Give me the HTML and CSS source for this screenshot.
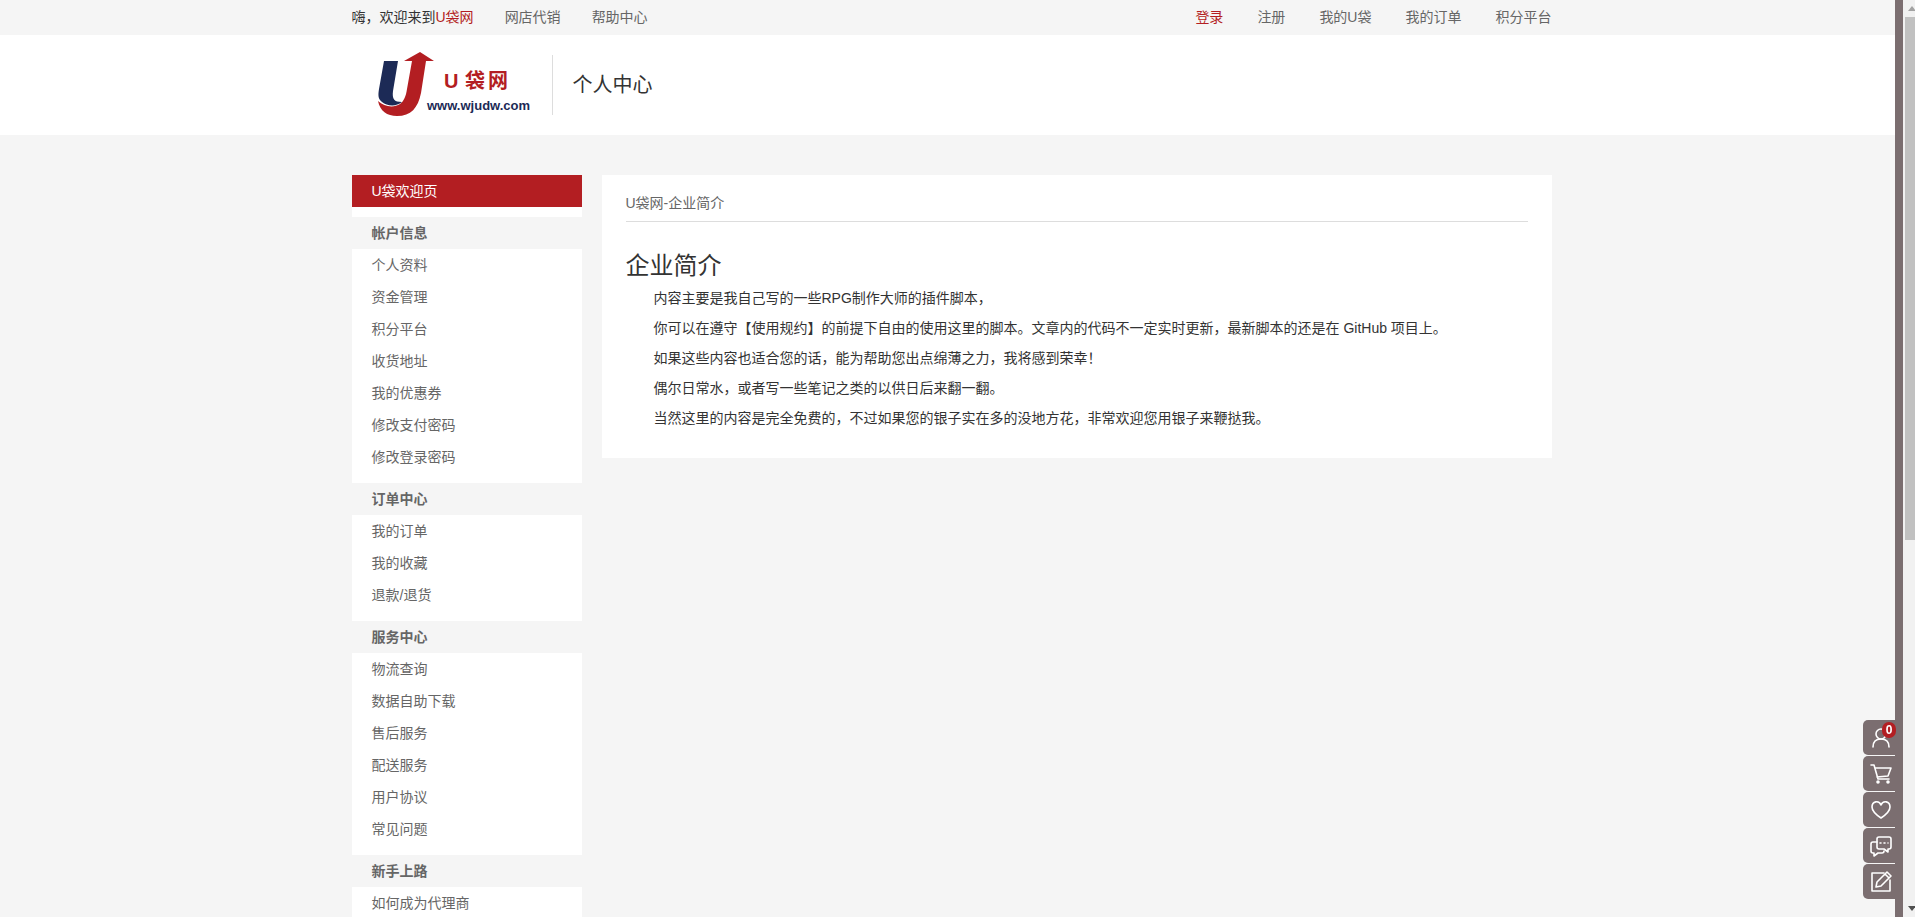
FILE: index.html
```html
<!DOCTYPE html>
<html lang="zh-CN">
<head>
  <meta charset="UTF-8">
  <meta name="viewport" content="width=device-width, initial-scale=1">
  <title>U袋网 - 企业简介</title>
  <link rel="stylesheet" href="styles.css">
</head>
<body>

  <!-- 顶部导航 -->
  <div class="top-bar">
    <div class="container top-inner">
      <nav class="top-links">
        <span>嗨，欢迎来到<a class="red" href="#">U袋网</a></span>
        <a href="#">网店代销</a>
        <a href="#">帮助中心</a>
      </nav>
      <nav class="top-links">
        <a class="red" href="#">登录</a>
        <a href="#">注册</a>
        <a href="#">我的U袋</a>
        <a href="#">我的订单</a>
        <a href="#">积分平台</a>
      </nav>
    </div>
  </div>

  <header class="header">
    <div class="container header-inner">
      <a class="logo" href="#">
        <svg width="200" height="80" viewBox="0 0 200 80" role="img" aria-label="U袋网">
          <path fill="#b31e22" d="M68 7 L82 16 L74 16 L69 48 C66 63 59 71 45 71 C35 71 28 66 26 56 C32 62 42 63 48 59 C52 56 54 51 55 44 L60 16 L52 16 Z"/>
          <path fill="#1c2a56" d="M32 16 H46 L41 46 C40 54 42 57 50 57 C44 62 35 61 30 57 C26 54 26 50 27 44 Z"/>
          <text class="logo-name" x="92" y="43">U</text>
          <text class="logo-name" x="113" y="43">袋</text>
          <text class="logo-name" x="136" y="43">网</text>
          <text class="logo-url" x="75" y="65">www.wjudw.com</text>
        </svg>
      </a>
      <div class="header-title">个人中心</div>
    </div>
  </header>

  <div class="container content">
    <aside class="side">
      <div class="side-group">
        <a class="active" href="#">U袋欢迎页</a>
      </div>
      <div class="side-group">
        <h3>帐户信息</h3>
        <a href="#">个人资料</a>
        <a href="#">资金管理</a>
        <a href="#">积分平台</a>
        <a href="#">收货地址</a>
        <a href="#">我的优惠券</a>
        <a href="#">修改支付密码</a>
        <a href="#">修改登录密码</a>
      </div>
      <div class="side-group">
        <h3>订单中心</h3>
        <a href="#">我的订单</a>
        <a href="#">我的收藏</a>
        <a href="#">退款/退货</a>
      </div>
      <div class="side-group">
        <h3>服务中心</h3>
        <a href="#">物流查询</a>
        <a href="#">数据自助下载</a>
        <a href="#">售后服务</a>
        <a href="#">配送服务</a>
        <a href="#">用户协议</a>
        <a href="#">常见问题</a>
      </div>
      <div class="side-group">
        <h3>新手上路</h3>
        <a href="#">如何成为代理商</a>
      </div>
    </aside>

    <main class="main">
      <div class="main-title">U袋网-企业简介</div>
      <article class="article">
        <h1>企业简介</h1>
        <p>内容主要是我自己写的一些RPG制作大师的插件脚本，</p>
        <p>你可以在遵守【使用规约】的前提下自由的使用这里的脚本。文章内的代码不一定实时更新，最新脚本的还是在 GitHub 项目上。</p>
        <p>如果这些内容也适合您的话，能为帮助您出点绵薄之力，我将感到荣幸！</p>
        <p>偶尔日常水，或者写一些笔记之类的以供日后来翻一翻。</p>
        <p>当然这里的内容是完全免费的，不过如果您的银子实在多的没地方花，非常欢迎您用银子来鞭挞我。</p>
      </article>
    </main>
  </div>

  <!-- 右侧悬浮工具栏 -->
  <div class="toolbar">
    <div class="tools">
      <a href="#" aria-label="个人中心">
        <svg viewBox="0 0 22 22"><circle cx="11" cy="7" r="5"/><path d="M3 20c0-5 3-8 8-8s8 3 8 8"/></svg>
        <span class="badge">0</span>
      </a>
      <a href="#" aria-label="购物车">
        <svg viewBox="0 0 22 22"><path d="M1 2h3l4 14h11M5 5h16l-3 8-11 1"/><circle class="dot" cx="8" cy="19" r="1"/><circle class="dot" cx="18" cy="19" r="1"/></svg>
      </a>
      <a href="#" aria-label="收藏">
        <svg viewBox="0 0 22 22"><path d="M11 19C5 15 2 12 2 8c0-6 7-7 9-2 2-5 9-4 9 2 0 4-3 7-9 11z"/></svg>
      </a>
      <a href="#" aria-label="在线客服">
        <svg viewBox="0 0 22 22"><path d="M9 2h10q2 0 2 2v8q0 2-2 2h-1v3l-4-3H9q-2 0-2-2V4q0-2 2-2z"/><path d="M7 7H3Q1 7 1 9v7q0 2 2 2h1v3l4-3h4q2 0 2-2"/><path d="M10 8h1M14 8h1M18 8h0"/></svg>
      </a>
      <a href="#" aria-label="意见反馈">
        <svg viewBox="0 0 22 22"><path d="M14 2H2v18h18V9"/><path d="M6 16l1-5L17 1l4 4-10 10zM15 3l4 4"/></svg>
      </a>
    </div>
    <div class="strip"></div>
  </div>

  <div class="scrollbar">
    <svg class="arrow" viewBox="0 0 17 17"><path fill="#a3a3a3" d="M5 11h8l-4-5z"/></svg>
    <div class="thumb"></div>
    <svg class="arrow" viewBox="0 0 17 17"><path fill="#505050" d="M5 6h8l-4 5z"/></svg>
  </div>

</body>
</html>
```
FILE: styles.css
```css
* {
  box-sizing: border-box;
}
html {
  height: 100%;
}
body {
  margin: 0;
  height: 100%;
  padding-right: 12px;
  overflow: hidden;
  background: #f5f5f5;
  color: #333;
  font-family: "Liberation Sans", "Noto Sans CJK SC", sans-serif;
  font-size: 14px;
}
a {
  color: #666;
  text-decoration: none;
}
h1, h3, p {
  margin: 0;
}
.container {
  max-width: 1200px;
  margin: 0 auto;
}

/* 顶部导航 */
.top-bar {
  line-height: 35px;
}
.top-inner {
  display: flex;
  justify-content: space-between;
}
.top-links {
  display: flex;
  gap: 34px;
}
.top-links:first-child {
  gap: 31px;
}
.top-links .red {
  color: #b31e22;
}

/* 头部 */
.header {
  background: #fff;
}
.header-inner {
  display: flex;
  align-items: center;
  height: 100px;
}
.logo {
  height: 80px;
}
.logo svg {
  display: block;
}
.logo-name {
  fill: #b31e22;
  font-size: 20px;
  font-weight: bold;
}
.logo-url {
  fill: #1c2a56;
  font-size: 13px;
  font-weight: bold;
}
.header-title {
  padding-left: 20px;
  border-left: 1px solid #ddd;
  font-size: 20px;
  line-height: 60px;
}

/* 主体 */
.content {
  display: flex;
  align-items: flex-start;
  gap: 20px;
  margin-top: 40px;
}
.side {
  flex: 0 0 230px;
  line-height: 32px;
}
.side-group {
  padding-bottom: 10px;
  background: #fff;
}
.side-group h3 {
  padding-left: 20px;
  background: #f5f5f5;
  color: #666;
  font-size: 14px;
}
.side-group a {
  display: block;
  padding-left: 20px;
}
.side-group .active {
  background: #b31e22;
  color: #fff;
}
.main {
  flex: 1;
  padding: 10px 24px 25px;
  background: #fff;
}
.main-title {
  border-bottom: 1px solid #ddd;
  color: #666;
  line-height: 36px;
}
.article {
  padding-top: 26px;
  line-height: 30px;
}
.article h1 {
  font-size: 24px;
  font-weight: normal;
  line-height: 35px;
}
.article p {
  text-indent: 2em;
}

/* 悬浮工具栏 */
.toolbar {
  position: fixed;
  top: 0;
  right: 12px;
  bottom: 0;
  display: flex;
  align-items: flex-end;
}
.strip {
  width: 8px;
  height: 100%;
  background: #7b6e70;
}
.tools {
  display: flex;
  flex-direction: column;
  gap: 1px;
  padding-bottom: 18px;
}
.tools a {
  position: relative;
  display: flex;
  align-items: center;
  justify-content: center;
  width: 32px;
  height: 35px;
  padding-left: 3px;
  border-radius: 5px 0 0 5px;
  background: #7b6e70;
}
.tools svg {
  width: 22px;
  height: 22px;
  fill: none;
  stroke: #fff;
  stroke-width: 1.6;
  stroke-linecap: round;
  stroke-linejoin: round;
}
.tools .dot {
  fill: #fff;
}
.badge {
  position: absolute;
  top: 2px;
  right: -1px;
  width: 14px;
  height: 16px;
  border-radius: 8px;
  background: #b31e22;
  color: #fff;
  font-size: 12px;
  font-weight: bold;
  line-height: 16px;
  text-align: center;
}

/* 滚动条 */
.scrollbar {
  position: fixed;
  top: 0;
  right: 0;
  bottom: 0;
  display: flex;
  flex-direction: column;
  width: 12px;
  overflow: hidden;
  background: #f1f1f1;
}
.arrow {
  flex: none;
  width: 17px;
  height: 17px;
}
.thumb {
  flex: 0 0 57%;
  margin: 0 0 auto 2px;
  background: #c1c1c1;
}
```
